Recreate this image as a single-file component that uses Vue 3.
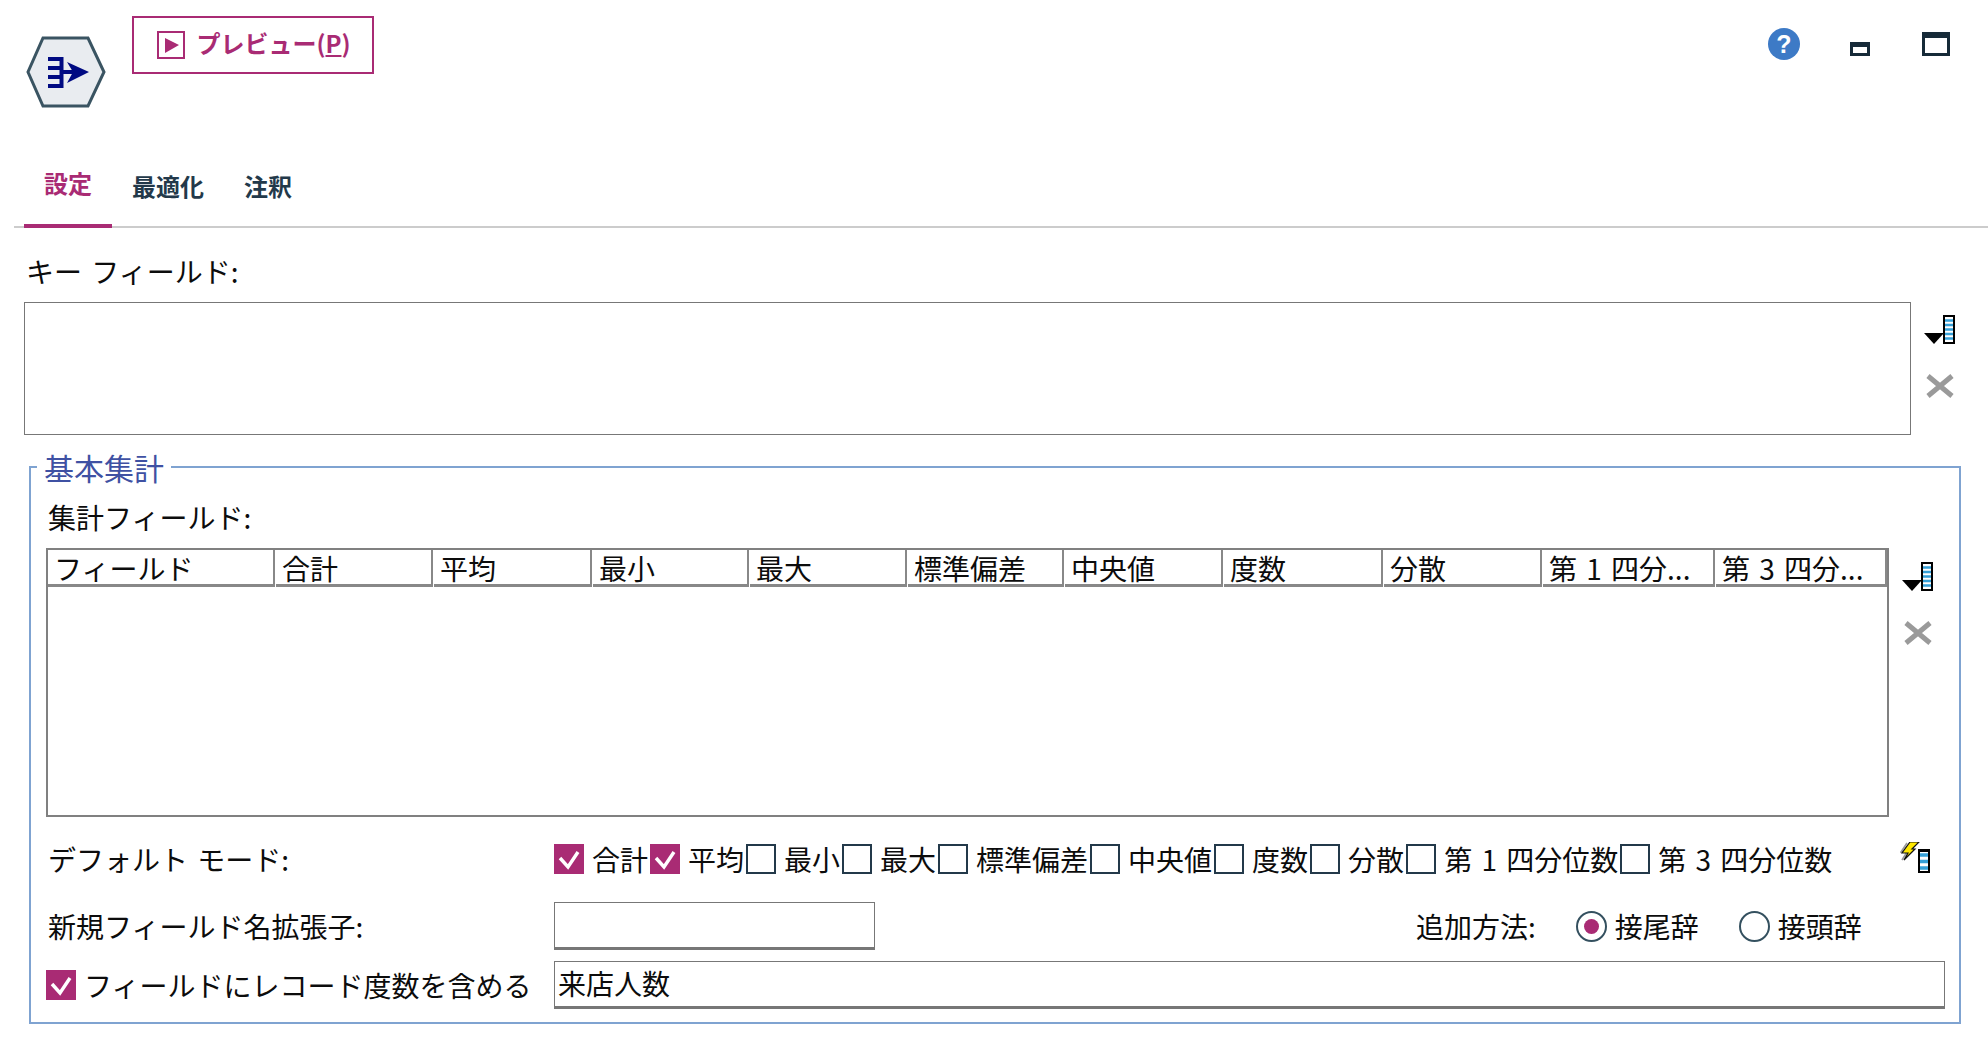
<script setup>
const columns = [
  { label: 'フィールド', w: 227 }, { label: '合計', w: 157 }, { label: '平均', w: 158 }, { label: '最小', w: 156 },
  { label: '最大', w: 157 }, { label: '標準偏差', w: 156 }, { label: '中央値', w: 158 }, { label: '度数', w: 159 },
  { label: '分散', w: 158 }, { label: '第 1 四分...', w: 172 }, { label: '第 3 四分...', w: 171 }
]
const modes = [
  { label: '合計', on: true }, { label: '平均', on: true }, { label: '最小' }, { label: '最大' }, { label: '標準偏差' },
  { label: '中央値' }, { label: '度数' }, { label: '分散' }, { label: '第 1 四分位数' }, { label: '第 3 四分位数' }
]
</script>

<template>
  <div class="page">
    <header class="top">
      <svg class="logo" viewBox="0 0 80 72">
        <polygon points="17,2 62,2 78,36 62,70 17,70 2,36" fill="#e9ecf0" stroke="#3a5462" stroke-width="3" />
        <g fill="#000a82">
          <rect x="22" y="21" width="15" height="4" /><rect x="22" y="30" width="15" height="4" />
          <rect x="22" y="39" width="15" height="4" /><rect x="22" y="48" width="15" height="4" />
          <rect x="33.5" y="21" width="4" height="31" />
          <rect x="37" y="34" width="12" height="4" />
          <polygon points="41,26 63,36 41,47 47,36" />
        </g>
      </svg>
      <button class="preview">
        <svg class="play" viewBox="0 0 28 28">
          <rect x="1" y="1" width="26" height="26" fill="none" stroke="#a92b74" stroke-width="2" />
          <polygon points="8,7 22,14 8,22" fill="#a92b74" />
        </svg>
        <span>プレビュー(<u>P</u>)</span>
      </button>
      <div class="win">
        <span class="help">?</span>
        <span class="win-min"></span>
        <span class="win-max"></span>
      </div>
    </header>

    <nav class="tabs">
      <a class="tab active">設定</a>
      <a class="tab">最適化</a>
      <a class="tab">注釈</a>
    </nav>

    <div class="label key-label">キー フィールド:</div>
    <div class="key-row">
      <div class="key-box"></div>
      <div class="tools">
        <svg class="pick" viewBox="0 0 32 29">
          <polygon points="0,18 20,18 10,29" fill="#000" />
          <rect x="19" y="0" width="12" height="29" fill="#000" />
          <rect x="21" y="2" width="8" height="25" fill="#fff" />
          <path d="M21 5.5h8M21 10h8M21 14.500h8M21 19h8M21 23.500h8" stroke="#35a0d8" stroke-width="2.6" />
        </svg>
        <svg class="del" viewBox="0 0 28 24"><path d="M2 2 26 22M26 2 2 22" stroke="#9a9a9a" stroke-width="5" /></svg>
      </div>
    </div>

    <fieldset class="group">
      <legend>基本集計</legend>
      <div class="label agg-label">集計フィールド:</div>
      <div class="table-row">
        <div class="table">
          <div class="thead">
            <div v-for="c in columns" :key="c.label" class="th" :style="{ width: c.w + 'px' }">{{ c.label }}</div>
          </div>
        </div>
        <div class="tools">
          <svg class="pick" viewBox="0 0 32 29">
            <polygon points="0,18 20,18 10,29" fill="#000" />
            <rect x="19" y="0" width="12" height="29" fill="#000" />
            <rect x="21" y="2" width="8" height="25" fill="#fff" />
            <path d="M21 5.500h8M21 10h8M21 14.500h8M21 19h8M21 23.500h8" stroke="#35a0d8" stroke-width="2.6" />
          </svg>
          <svg class="del" viewBox="0 0 28 24"><path d="M2 2 26 22M26 2 2 22" stroke="#9a9a9a" stroke-width="5" /></svg>
        </div>
      </div>

      <div class="mode-row">
        <div class="label mode-label">デフォルト モード:</div>
        <label v-for="m in modes" :key="m.label" class="check">
          <span class="box" :class="{ on: m.on }">
            <svg v-if="m.on" viewBox="0 0 30 30"><path d="M6 14l8 9 10-15" fill="none" stroke="#fff" stroke-width="3.4" /></svg>
          </span>
          <span>{{ m.label }}</span>
        </label>
        <svg class="bolt" viewBox="0 0 30 31">
          <path d="M7 1 1 10h6L2 18" fill="none" stroke="#999" stroke-width="1.6" />
          <polygon points="10,0 19,0 12,7 15,7 4,18 8,11 2,11" fill="#ffe800" stroke="#111" stroke-width="1.2" />
          <rect x="18" y="7" width="12" height="24" fill="#000" />
          <rect x="20" y="10" width="8" height="19" fill="#fff" />
          <path d="M20 13h8M20 19.500h8M20 26h8" stroke="#35a0d8" stroke-width="3.6" />
        </svg>
      </div>

      <div class="ext-row">
        <div class="label mode-label">新規フィールド名拡張子:</div>
        <div class="input ext-input"></div>
        <div class="method">追加方法:</div>
        <label class="radio first"><span class="dot on"></span>接尾辞</label>
        <label class="radio"><span class="dot"></span>接頭辞</label>
      </div>

      <div class="count-row">
        <label class="check count-check">
          <span class="box on"><svg viewBox="0 0 30 30"><path d="M6 14l8 9 10-15" fill="none" stroke="#fff" stroke-width="3.4" /></svg></span>
          <span>フィールドにレコード度数を含める</span>
        </label>
        <div class="input count-input">来店人数</div>
      </div>
    </fieldset>
  </div>
</template>

<style>
html, body { margin: 0; background: #fff; }
</style>

<style scoped>
.page {
  width: 1988px;
  height: 1048px;
  overflow: hidden;
  font-family: "Noto Sans CJK JP", "Noto Sans", sans-serif;
  font-size: 28px;
  word-spacing: 3px;
  color: #0c0c0c;
  background: #fff;
}
.top { display: flex; align-items: flex-start; height: 130px; padding: 16px 0 0 26px; box-sizing: border-box; }
.logo { width: 80px; height: 72px; margin-top: 20px; flex: none; filter: blur(0.4px); }
.preview {
  display: flex; align-items: center; justify-content: center; gap: 11px;
  width: 242px; height: 58px; margin-left: 26px; padding: 0 0 5px 2px;
  box-sizing: border-box; background: #fff; border: 2px solid #a92b74; color: #a92b74;
  font: 700 24px "Noto Sans CJK JP", sans-serif;
}
.play { width: 28px; height: 28px; margin-top: 5px; }
.win { display: flex; align-items: flex-start; margin-left: auto; padding-top: 12px; margin-right: 38px; }
.help {
  width: 32px; height: 32px; border-radius: 50%; background: #3d7ac6; color: #fff; text-align: center;
  font: 700 25px/32px "Liberation Sans", sans-serif; margin-right: 50px;
}
.win-min { width: 20px; height: 14px; margin: 14px 52px 0 0; border: 3px solid #162a38; border-top-width: 5px; box-sizing: border-box; }
.win-max { width: 28px; height: 24px; margin: 4px 0 0; border: 3px solid #162a38; border-top-width: 6px; box-sizing: border-box; }

.tabs { display: flex; height: 98px; margin-left: 14px; border-bottom: 2px solid #ccc; box-sizing: border-box; padding-left: 10px; }
.tab { height: 98px; box-sizing: border-box; font-weight: 700; font-size: 24px; line-height: 34px; padding-top: 39px; color: #23394a; margin-right: 40px; }
.tab.active { width: 88px; margin-right: 20px; text-align: center; padding-top: 36px; color: #a92b74; border-bottom: 4px solid #a92b74; }

.label { line-height: 36px; white-space: nowrap; }
.key-label { margin: 25px 0 0 26px; }
.key-row { display: flex; align-items: flex-start; margin: 13px 0 0 24px; }
.key-box { width: 1887px; height: 133px; box-sizing: border-box; border: 1.5px solid #777; flex: none; }
.key-row .tools { margin: 13px 0 0 13px; }
.tools { display: flex; flex-direction: column; align-items: center; }
.pick { width: 32px; height: 29px; }
.del { width: 28px; height: 24px; margin-top: 30px; filter: blur(0.5px); }

.group {
  width: 1932px; height: 575px; margin: 14px 0 0 29px; padding: 0 0 0 15px; box-sizing: border-box;
  border: 2px solid #7fa3d1; min-width: 0; display: block;
}
legend { padding: 0 7px; margin-left: -9px; font-size: 30px; line-height: 36px; color: #3f51a3; }
.agg-label { margin: 14px 0 0 2px; }
.table-row { display: flex; align-items: flex-start; margin-top: 13px; }
.table { width: 1843px; height: 269px; box-sizing: border-box; border: 2px solid #808080; flex: none; }
.thead { display: flex; height: 37px; }
.th { box-sizing: border-box; height: 37px; padding-left: 6px; border-bottom: 3px solid #888; border-right: 2px solid #888; line-height: 36px; margin-right: 1px; white-space: nowrap; flex: none; }
.table-row .tools { margin: 14px 0 0 13px; }

.mode-row { display: flex; align-items: center; height: 36px; margin-top: 24px; }
.mode-label { width: 508px; flex: none; padding-left: 2px; box-sizing: border-box; }
.check { display: flex; align-items: center; gap: 8px; margin-right: 2px; white-space: nowrap; }
.box { width: 30px; height: 30px; box-sizing: border-box; border: 2px solid #23394a; flex: none; }
.box.on { background: #a92b74; border: 0; }
.box svg { display: block; width: 30px; height: 30px; }
.bolt { width: 30px; height: 31px; margin-left: auto; margin-right: 29px; margin-bottom: 3px; flex: none; }

.ext-row { display: flex; align-items: center; height: 48px; margin-top: 25px; }
.input { box-sizing: border-box; border: 1.5px solid #777; border-bottom-width: 3px; }
.ext-input { width: 321px; height: 48px; flex: none; }
.method { margin-left: 541px; }
.radio { display: flex; align-items: center; gap: 8px; }
.radio.first { margin: 0 40px 0 40px; }
.dot { width: 31px; height: 31px; border-radius: 50%; border: 2px solid #34505f; box-sizing: border-box; display: block; position: relative; }
.dot.on::after { content: ""; position: absolute; inset: 6px; border-radius: 50%; background: #a92b74; }

.count-row { display: flex; align-items: center; height: 48px; margin-top: 11px; }
.count-check { width: 508px; margin: 0; flex: none; }
.count-input { width: 1391px; height: 48px; flex: none; line-height: 43px; padding-left: 3px; }
</style>
